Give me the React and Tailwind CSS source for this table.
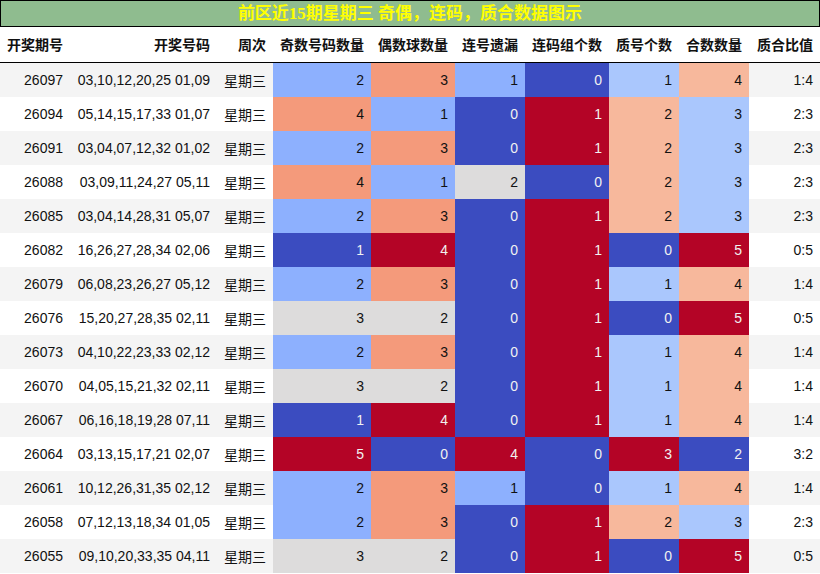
import React from 'react'

const BLUE = '#3b4cc0'
const RED = '#b40426'

const rows = [
  ['26097', '03,10,12,20,25 01,09', 2, 3, 1, 0, 1, 4, '1:4'],
  ['26094', '05,14,15,17,33 01,07', 4, 1, 0, 1, 2, 3, '2:3'],
  ['26091', '03,04,07,12,32 01,02', 2, 3, 0, 1, 2, 3, '2:3'],
  ['26088', '03,09,11,24,27 05,11', 4, 1, 2, 0, 2, 3, '2:3'],
  ['26085', '03,04,14,28,31 05,07', 2, 3, 0, 1, 2, 3, '2:3'],
  ['26082', '16,26,27,28,34 02,06', 1, 4, 0, 1, 0, 5, '0:5'],
  ['26079', '06,08,23,26,27 05,12', 2, 3, 0, 1, 1, 4, '1:4'],
  ['26076', '15,20,27,28,35 02,11', 3, 2, 0, 1, 0, 5, '0:5'],
  ['26073', '04,10,22,23,33 02,12', 2, 3, 0, 1, 1, 4, '1:4'],
  ['26070', '04,05,15,21,32 02,11', 3, 2, 0, 1, 1, 4, '1:4'],
  ['26067', '06,16,18,19,28 07,11', 1, 4, 0, 1, 1, 4, '1:4'],
  ['26064', '03,13,15,17,21 02,07', 5, 0, 4, 0, 3, 2, '3:2'],
  ['26061', '10,12,26,31,35 02,12', 2, 3, 1, 0, 1, 4, '1:4'],
  ['26058', '07,12,13,18,34 01,05', 2, 3, 0, 1, 2, 3, '2:3'],
  ['26055', '09,10,20,33,35 04,11', 3, 2, 0, 1, 0, 5, '0:5'],
]

// coolwarm stops, per column min..max
const palette = {
  2: ['#3b4cc0', '#8db0fe', '#dddcdc', '#f49a7b', '#b40426'],
  3: ['#3b4cc0', '#8db0fe', '#dddcdc', '#f49a7b', '#b40426'],
  4: ['#3b4cc0', '#8db0fe', '#dddcdc', null, '#b40426'],
  5: ['#3b4cc0', '#b40426'],
  6: ['#3b4cc0', '#aac7fd', '#f7b89c', '#b40426'],
  7: [null, null, '#3b4cc0', '#aac7fd', '#f7b89c', '#b40426'],
}
const offset = { 2: -1, 3: 0, 4: 0, 5: 0, 6: 0, 7: 0 }

const headers = ['开奖期号', '开奖号码', '周次', '奇数号码数量', '偶数球数量', '连号遗漏', '连码组个数', '质号个数', '合数数量', '质合比值']

const grid = 'grid grid-cols-[70px_147px_56px_98px_84px_70px_84px_70px_70px_1fr]'

function Cell({ value, col }) {
  const bg = palette[col][value + offset[col]]
  const dark = bg === BLUE || bg === RED
  return (
    <div
      className={`flex items-center justify-end pr-[7px] ${dark ? 'text-[#f1f1f1]' : 'text-[#111]'}`}
      style={{ backgroundColor: bg }}
    >
      {value}
    </div>
  )
}

export default function App() {
  return (
    <div className="w-[820px] h-[574px] bg-white overflow-hidden font-['Liberation_Sans','Noto_Sans_CJK_SC',sans-serif] text-[14px] text-[#111]">
      <div className="h-[27px] bg-[#8fbc8f] border border-black flex items-center justify-center">
        <span className="text-[#ffff00] font-bold text-[17px] font-['Liberation_Serif','Noto_Sans_CJK_SC',serif]">
          前区近15期星期三 奇偶，连码，质合数据图示
        </span>
      </div>
      <div className={`${grid} h-[36px] border-b border-black font-bold font-['Noto_Sans_CJK_SC',sans-serif]`}>
        {headers.map((h) => (
          <div key={h} className="flex items-center justify-end pr-[7px] whitespace-nowrap">{h}</div>
        ))}
      </div>
      {rows.map((r, i) => (
        <div key={r[0]} className={`${grid} h-[34px] ${i % 2 === 0 ? 'bg-[#f4f4f4]' : 'bg-white'}`}>
          <div className="flex items-center justify-end pr-[7px]">{r[0]}</div>
          <div className="flex items-center justify-end pr-[7px] whitespace-nowrap">{r[1]}</div>
          <div className="flex items-center justify-end pr-[7px] font-['Noto_Sans_CJK_SC',sans-serif]">星期三</div>
          {[2, 3, 4, 5, 6, 7].map((c) => (
            <Cell key={c} value={r[c]} col={c} />
          ))}
          <div className="flex items-center justify-end pr-[7px]">{r[8]}</div>
        </div>
      ))}
    </div>
  )
}
